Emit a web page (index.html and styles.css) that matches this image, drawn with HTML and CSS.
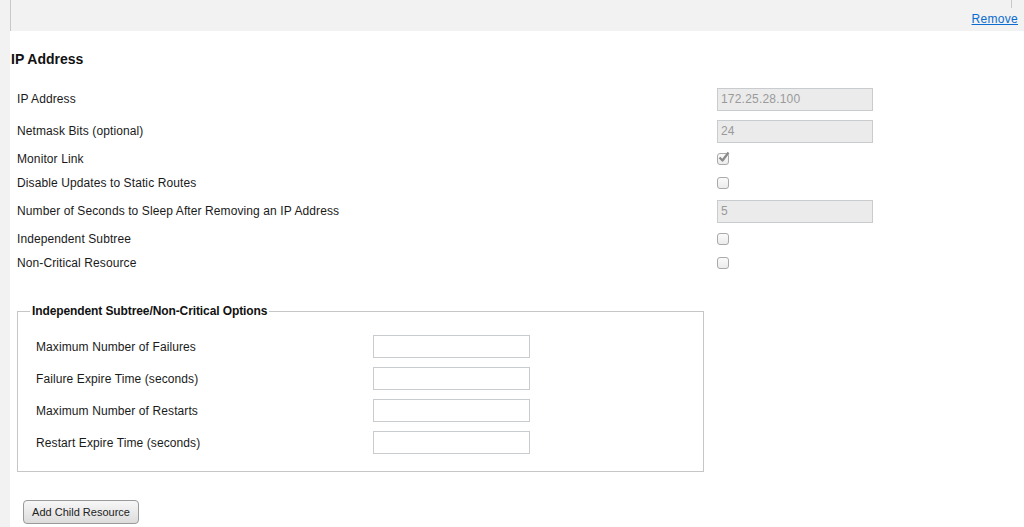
FILE: index.html
```html
<!DOCTYPE html>
<html>
<head>
<meta charset="utf-8">
<link rel="stylesheet" href="styles.css">
</head>
<body>
<div class="main">
  <div class="topbar">
    <span class="topline"></span>
    <a class="remove" href="#">Remove</a>
  </div>
  <h2 class="title">IP Address</h2>
  <div class="rows">
    <div class="label">IP Address</div>
    <div class="ctl"><input class="field dis" type="text" value="172.25.28.100" disabled></div>
    <div class="label">Netmask Bits (optional)</div>
    <div class="ctl"><input class="field dis" type="text" value="24" disabled></div>
    <div class="label">Monitor Link</div>
    <div class="ctl"><span class="cb checked"><svg width="14" height="14" viewBox="0 0 14 14"><path d="M2.5 6.5 L5.5 9.5 L11.5 1.5" fill="none" stroke="#8a8a8a" stroke-width="2.2" stroke-linejoin="round"/></svg></span></div>
    <div class="label">Disable Updates to Static Routes</div>
    <div class="ctl"><span class="cb"></span></div>
    <div class="label">Number of Seconds to Sleep After Removing an IP Address</div>
    <div class="ctl"><input class="field dis" type="text" value="5" disabled></div>
    <div class="label">Independent Subtree</div>
    <div class="ctl"><span class="cb"></span></div>
    <div class="label">Non-Critical Resource</div>
    <div class="ctl"><span class="cb"></span></div>
  </div>
  <fieldset class="opts">
    <legend>Independent Subtree/Non-Critical Options</legend>
    <div class="orows">
      <div class="label">Maximum Number of Failures</div>
      <div class="ctl"><input class="field" type="text"></div>
      <div class="label">Failure Expire Time (seconds)</div>
      <div class="ctl"><input class="field" type="text"></div>
      <div class="label">Maximum Number of Restarts</div>
      <div class="ctl"><input class="field" type="text"></div>
      <div class="label">Restart Expire Time (seconds)</div>
      <div class="ctl"><input class="field" type="text"></div>
    </div>
  </fieldset>
  <button class="btn" type="button">Add Child Resource</button>
</div>
</body>
</html>
```
FILE: styles.css
```css
html, body {
  margin: 0;
  padding: 0;
}
body {
  background: #f2f2f2;
  font-family: "Liberation Sans", Arial, sans-serif;
  font-size: 12px;
  color: #1a1a1a;
  height: 527px;
  overflow: hidden;
}
.main {
  margin-left: 10px;
  background: #fff;
  min-height: 527px;
}
.topbar {
  height: 31px;
  background: #f2f2f2;
  border-left: 1px solid #c8c8c8;
  position: relative;
  display: flex;
  justify-content: flex-end;
  align-items: flex-end;
  padding-right: 6px;
}
.topline {
  position: absolute;
  left: 1000px;
  top: 0;
  width: 1px;
  height: 8px;
  background: #c8c8c8;
}
.remove {
  color: #0a6ccf;
  font-size: 12px;
  line-height: 14px;
  margin-bottom: 5px;
  letter-spacing: 0.3px;
  text-decoration: underline;
}
.title {
  margin: 20px 0 0 1px;
  font-size: 14px;
  line-height: 17px;
  font-weight: bold;
  color: #111;
}
.rows {
  margin: 15px 0 0 7px;
  display: grid;
  grid-template-columns: 700px 156px;
  grid-template-rows: 32px 32px 24px 24px 32px 24px 24px;
  align-items: center;
}
.label {
  line-height: 14px;
  letter-spacing: 0.1px;
}
.ctl {
  display: flex;
  align-items: center;
}
.field {
  box-sizing: border-box;
  width: 156px;
  height: 23px;
  margin: 0;
  border: 1px solid #c9cccf;
  background: #fff;
  font-family: "Liberation Sans", Arial, sans-serif;
  font-size: 12px;
  letter-spacing: 0.2px;
  padding: 0 3px;
  color: #333;
}
.field.dis {
  background: #ebebeb;
  color: #9a9a9a;
}
.cb {
  box-sizing: border-box;
  width: 12px;
  height: 12px;
  border: 1px solid #a9a9a9;
  border-radius: 3px;
  background: linear-gradient(#fafafa, #ececec);
  position: relative;
}
.cb svg {
  position: absolute;
  left: -1px;
  top: -3px;
}
.opts {
  box-sizing: border-box;
  width: 687px;
  margin: 29px 0 0 7px;
  padding: 12px 12px 13px 18px;
  border: 1px solid #c6c6c6;
}
.opts legend {
  font-weight: bold;
  font-size: 12px;
  letter-spacing: -0.1px;
  padding: 0 2px;
  margin-left: -6px;
  color: #111;
}
.orows {
  display: grid;
  grid-template-columns: 337px 157px;
  grid-auto-rows: 32px;
  align-items: center;
}
.orows .label {
  padding-top: 1px;
}
.orows .field {
  width: 157px;
}
.btn {
  margin: 28px 0 0 13px;
  box-sizing: border-box;
  width: 116px;
  height: 24px;
  border: 1px solid #9a9a9a;
  border-radius: 4px;
  background: linear-gradient(#f7f7f7, #dcdcdc);
  font-family: "Liberation Sans", Arial, sans-serif;
  font-size: 11px;
  color: #222;
  padding: 0;
}
```
